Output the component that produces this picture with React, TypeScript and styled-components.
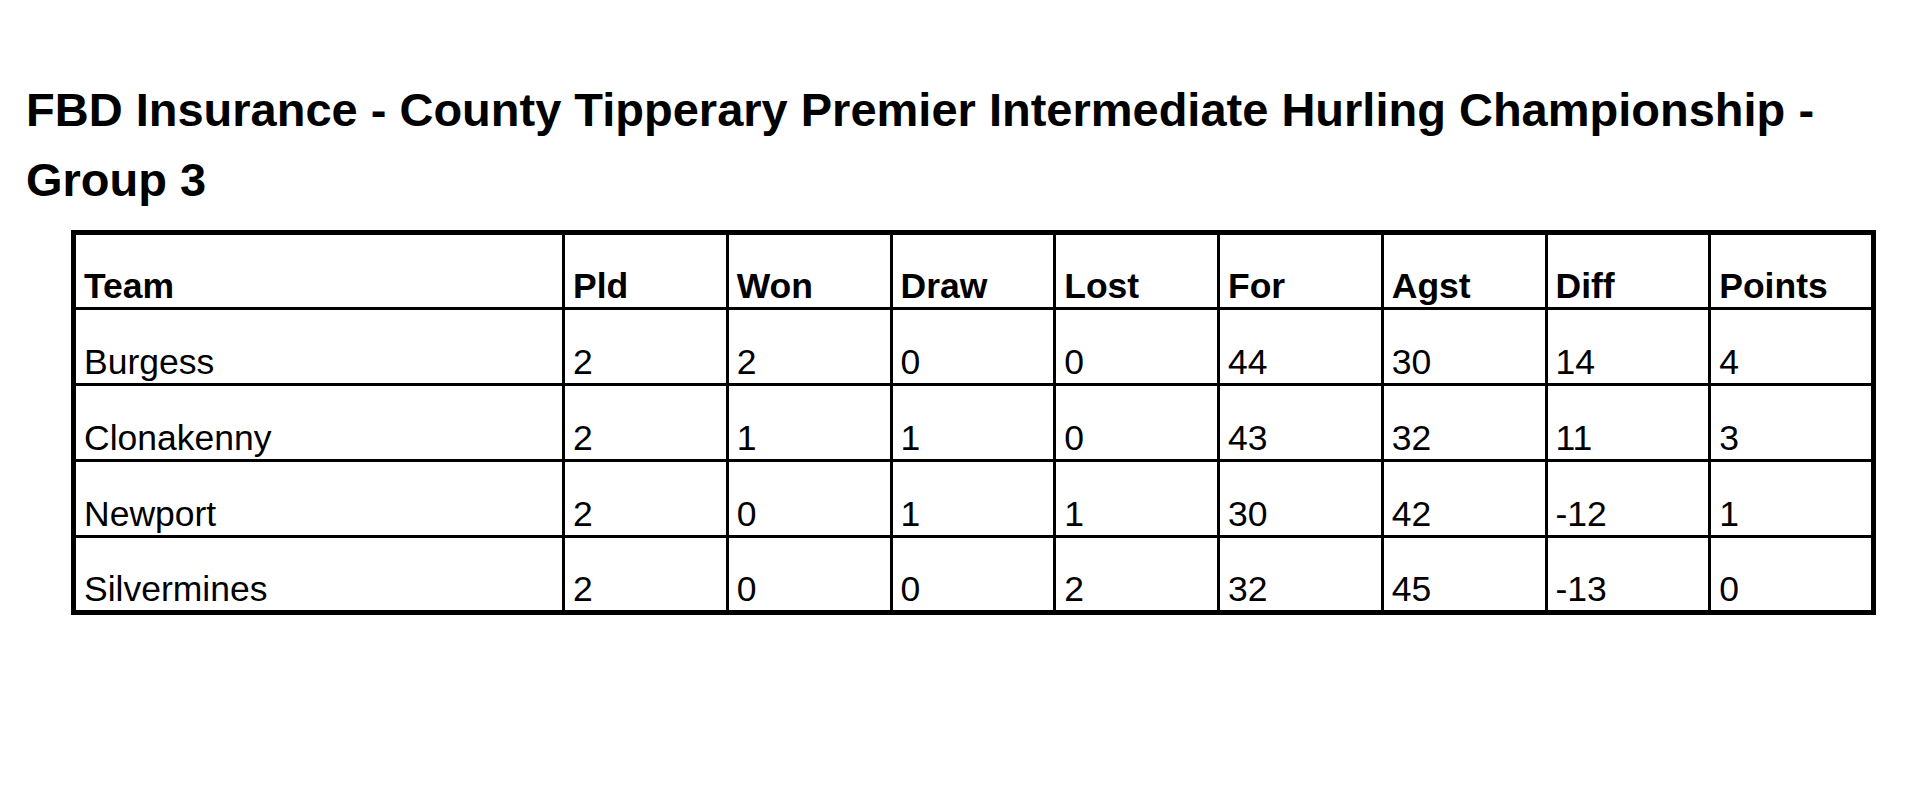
import styled, { createGlobalStyle } from 'styled-components'

const GlobalStyle = createGlobalStyle`
  body {
    margin: 0;
    background: #fff;
    color: #000;
    font-family: "Liberation Sans", Arial, sans-serif;
  }
`

const HEADERS = ['Team', 'Pld', 'Won', 'Draw', 'Lost', 'For', 'Agst', 'Diff', 'Points']

const ROWS = [
  ['Burgess', 2, 2, 0, 0, 44, 30, 14, 4],
  ['Clonakenny', 2, 1, 1, 0, 43, 32, 11, 3],
  ['Newport', 2, 0, 1, 1, 30, 42, -12, 1],
  ['Silvermines', 2, 0, 0, 2, 32, 45, -13, 0],
]

function App() {
  return (
    <Page>
      <GlobalStyle />
      <Title>FBD Insurance - County Tipperary Premier Intermediate Hurling Championship - Group 3</Title>
      <Standings>
        <colgroup>
          <col style={{ width: 490 }} />
          {HEADERS.slice(1).map(h => <col key={h} style={{ width: 163.75 }} />)}
        </colgroup>
        <thead>
          <Row>
            {HEADERS.map(h => <HeadCell key={h}>{h}</HeadCell>)}
          </Row>
        </thead>
        <tbody>
          {ROWS.map(row => (
            <Row key={row[0]}>
              {row.map((value, i) => <Cell key={i}>{value}</Cell>)}
            </Row>
          ))}
        </tbody>
      </Standings>
    </Page>
  )
}

const Page = styled.main`
  padding: 75px 26px 0;
`
const Title = styled.h2`
  margin: 0 0 15px;
  font-size: 47px;
  line-height: 70px;
  font-weight: 700;
`
const Standings = styled.table`
  margin-left: 45px;
  width: 1800px;
  table-layout: fixed;
  border-collapse: collapse;
  border: 5px solid #000;
`
const Row = styled.tr`
  height: 76px;
`
const Cell = styled.td`
  border: 3px solid #000;
  padding: 0 8px 0;
  vertical-align: bottom;
  font-size: 35.5px;
  line-height: 1.15;
  text-align: left;
`
const HeadCell = styled(Cell).attrs({ as: 'th' })`
  font-weight: 700;
`

export default App
